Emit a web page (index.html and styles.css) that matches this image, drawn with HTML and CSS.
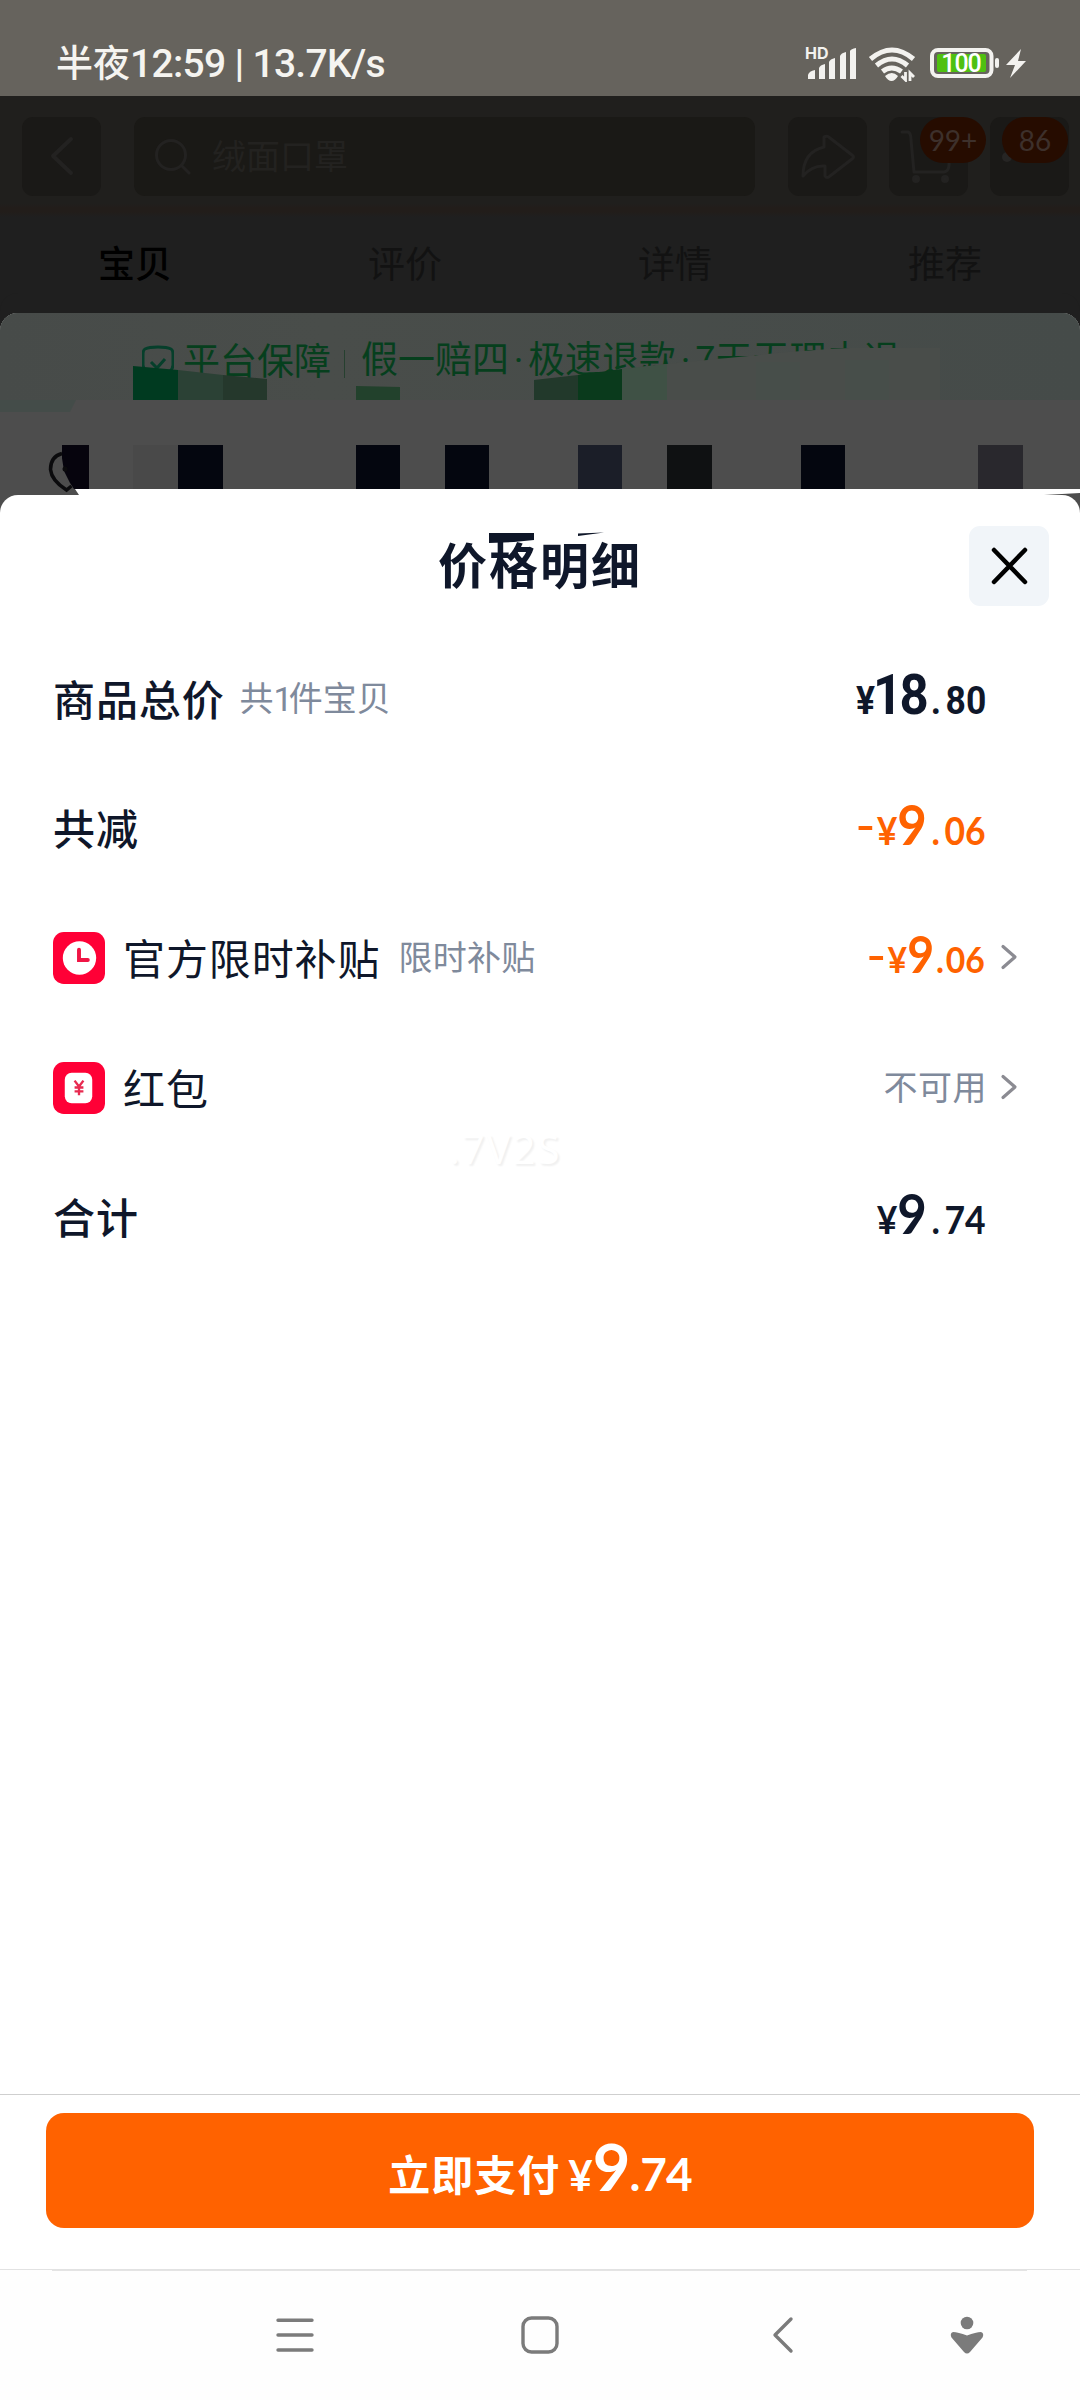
FILE: index.html
```html
<!DOCTYPE html>
<html lang="zh-CN">
<head>
<meta charset="utf-8">
<title>价格明细</title>
<link rel="stylesheet" href="styles.css">
</head>
<body>
<div class="phone">
  <header class="status">
    <span class="status-text">半夜<span class="latin">12:59 | 13.7K/s</span></span>
    <svg class="status-icons" width="224" height="40" viewBox="804 42 224 40">
      <text x="805" y="59" class="hd">HD</text>
      <g fill="#f3f2ef">
        <path d="M808 79v-4q1-4 7-5v9zM819 79v-11q1-3 6-4v15zM829 79v-17q1-3 6-4v21zM840 79v-23q1-3 6-4v27zM850 79v-28q1-2 6-3v31z"/>
        <path d="M885 76q7-6 13 0-3 5-6.500 5t-6.500-5z"/>
      </g>
      <g fill="none" stroke="#f3f2ef" stroke-width="5">
        <path d="M870.500 59q21.500-18 43 0"/>
        <path d="M876.500 65.500q15.500-13 31 0"/>
        <path d="M882.500 71.500q9-7 19 0"/>
      </g>
      <path d="M905 72v9l-5-5M910 82v-9l5 5" fill="none" stroke="#66635d" stroke-width="6"/>
      <path d="M905.500 72v8l-4-4M910 81v-8l4 4" fill="none" stroke="#f3f2ef" stroke-width="2.800"/>
      <rect x="932" y="50" width="59.500" height="26" rx="6" fill="none" stroke="#f3f2ef" stroke-width="4"/>
      <rect x="937" y="54" width="49" height="18" rx="2" fill="#4fc010"/>
      <rect x="995" y="58" width="4" height="10" rx="2" fill="#f3f2ef"/>
      <text x="961" y="72" class="battery-level" text-anchor="middle">100</text>
      <path d="M1021 49l-15 16h9l-5 13 16-17h-8z" fill="#f3f2ef"/>
    </svg>
  </header>

  <nav class="topbar">
    <div class="tile">
      <svg width="79" height="79" viewBox="0 0 79 79" class="line"><path d="M49 22L31 39l18 17"/></svg>
    </div>
    <div class="search">
      <svg width="36" height="36" viewBox="0 0 36 36" class="line thin"><circle cx="16" cy="16" r="14.500"/><path d="M27 27l7 7"/></svg>
      <span>绒面口罩</span>
    </div>
    <div class="tile">
      <svg width="79" height="79" viewBox="0 0 79 79" class="line thin"><path d="M36 30V20q3-2 6 1l22 17q3 2 0 4L42 59q-3 3-5 0V49q-13-1-22 10 0-24 21-29z"/></svg>
    </div>
    <div class="tile cart">
      <svg width="79" height="79" viewBox="0 0 79 79" class="line thin"><path d="M13 15h6q3 1 3 8l3 32h30q5-1 5-7l1-22"/><circle cx="27" cy="62" r="2.500" fill="#252423"/><circle cx="56" cy="62" r="2.500" fill="#252423"/></svg>
      <b class="badge badge-cart">99+</b>
    </div>
    <div class="tile">
      <svg width="79" height="79" viewBox="0 0 79 79"><circle cx="17" cy="40" r="5" fill="#262524"/></svg>
      <b class="badge badge-more">86</b>
    </div>
  </nav>

  <div class="tabs"><span class="active">宝贝</span><span>评价</span><span>详情</span><span>推荐</span></div>

  <section class="promo">
    <div class="guarantee">
      <svg width="32" height="36" viewBox="0 0 32 36" class="shield"><path d="M16 2q9 0 13 2 2 1 2 6v10q0 8-15 14Q1 28 1 20V10q0-5 2-6 4-2 13-2zM9 17l6 6 8-9"/></svg>
      <span class="guarantee-title">平台保障</span>
      <i class="divider"></i>
      <span>假一赔四<span class="sep">·</span>极速退款<span class="sep">·</span>7天无理由退</span>
    </div>
    <svg class="mosaic" width="1080" height="189" viewBox="0 313 1080 189">
      <path d="M0 400h76l-6 12H0z" fill="#444c49"/>
      <path d="M622 369l44-5 62-6 60-6 42-3 20-1h90v52H622z" fill="#494d4a"/>
      <path d="M133 366l45 4v30h-45z" fill="#003a20"/>
      <path d="M178 370l45 5v25h-45z" fill="#2b4135"/>
      <path d="M223 375l44 4v21h-44z" fill="#25382c"/>
      <path d="M356 386l44 1v13h-44z" fill="#22412c"/>
      <path d="M534 380l44-5v25h-44z" fill="#22392b"/>
      <path d="M578 375l44-6v31h-44z" fill="#0a3a1c"/>
      <path d="M622 369l45-5v36h-45z" fill="#3f5145"/>
      <path d="M756 362h44v38h-44zM845 360h44v40h-44z" fill="#474e4a"/>
      <path d="M62 445h27v44H74l-4-6-6-12-2-13z" fill="#06040d"/>
      <path d="M62 453.500q-11.500 3-11.500 16 1 11 16 20.500l5-4" fill="none" stroke="#0b0b0d" stroke-width="3.500"/>
      <circle cx="65" cy="469" r="2.500" fill="#0b0b0d"/>
      <path d="M133 445h45v44h-45z" fill="#494949"/>
      <path d="M178 445h45v44h-45zM356 445h44v44h-44zM445 445h44v44h-44zM801 445h44v44h-44z" fill="#04060f"/>
      <path d="M578 445h44v44h-44z" fill="#1b1e28"/>
      <path d="M667 445h45v44h-45z" fill="#0f1112"/>
      <path d="M978 445h45v44h-45z" fill="#29282d"/>
      <path d="M75 489h1005v4l-36 2H79z" fill="#fff"/>
    </svg>
  </section>

  <main class="sheet">
    <div class="sheet-head">
      <h1>价格明细</h1>
      <svg class="title-marks" width="120" height="16" viewBox="485 531 120 16"><path d="M489 533h45v7l-20 2-25 1z" fill="#0e1628"/><path d="M578 533.500l26-1-26 3.500z" fill="#0e1628"/></svg>
      <div class="close"><svg width="38" height="38" viewBox="0 0 38 38"><path d="M4 3L35 35M35 3L4 35"/></svg></div>
    </div>

    <div class="row strong">
      <span class="label">商品总价</span><span class="note count">共<span class="one">1</span>件宝贝</span>
      <div class="price plain-one"><span class="yen">¥</span><span class="int">18</span><span class="dot">.</span><span class="dec">80</span></div>
    </div>
    <div class="row strong">
      <span class="label">共减</span>
      <div class="price orange"><span class="minus"></span><span class="yen">¥</span><span class="int">9</span><span class="dot">.</span><span class="dec">06</span></div>
    </div>
    <div class="row">
      <svg class="icon" width="52" height="52" viewBox="0 0 53 53"><rect width="53" height="53" rx="11" fill="#ff0036"/><circle cx="27" cy="26.500" r="17" fill="#fff"/><path d="M26.500 18v10.500h9" fill="none" stroke="#f01545" stroke-width="4" stroke-linecap="round"/></svg>
      <span class="label">官方限时补贴</span><span class="note">限时补贴</span>
      <div class="price orange compact"><span class="minus"></span><span class="yen">¥</span><span class="int">9</span><span class="dot">.</span><span class="dec">06</span></div>
      <svg class="chevron" width="18" height="28" viewBox="0 0 18 28"><path d="M3 3.500l12 10.500L3 24.500"/></svg>
    </div>
    <div class="row">
      <svg class="icon" width="52" height="52" viewBox="0 0 53 53"><rect width="53" height="53" rx="11" fill="#ff0036"/><rect x="12" y="11" width="28" height="31" rx="7" fill="#fff"/><path d="M22 19l4.500 6 4.500-6M26.500 25v9M22 26h9M22 30h9" fill="none" stroke="#e82a50" stroke-width="2.400"/></svg>
      <span class="label">红包</span>
      <span class="unavailable">不可用</span>
      <svg class="chevron" width="18" height="28" viewBox="0 0 18 28"><path d="M3 3.500l12 10.500L3 24.500"/></svg>
      <span class="watermark">.7V2S</span>
    </div>
    <div class="row strong">
      <span class="label">合计</span>
      <div class="price"><span class="yen">¥</span><span class="int">9</span><span class="dot">.</span><span class="dec">74</span></div>
    </div>
  </main>

  <footer class="pay">
    <div class="pay-button">
      <span class="pay-label">立即支付</span><span class="pay-yen">¥</span><span class="pay-int">9</span><span class="pay-dot">.</span><span class="pay-dec">74</span>
    </div>
  </footer>

  <nav class="system">
    <i class="system-line"></i>
    <svg class="menu" width="38" height="38" viewBox="0 0 38 38"><path d="M2 4.200h34M2 19h34M2 34h34"/></svg>
    <svg class="home" width="38" height="38" viewBox="0 0 38 38"><rect x="2" y="2" width="34" height="34" rx="8.500"/></svg>
    <svg class="back" width="22" height="38" viewBox="0 0 22 38"><path d="M19 3L3 19l16 16"/></svg>
    <svg class="person" width="34" height="38" viewBox="0 0 34 38"><circle cx="17" cy="7" r="6.300"/><path d="M3 16q5 0 14 3.500 9-3.500 14-3.500 3.500 1 1.500 5.500L20 36q-3 3-6 0L1.500 21.500q-2-4.500 1.500-5.500z"/></svg>
  </nav>
</div>
</body>
</html>
```
FILE: styles.css
```css
* { box-sizing: border-box; }
body {
  margin: 0;
  background: #fff;
  font-family: "Noto Sans CJK SC", sans-serif;
  text-autospace: no-autospace;
}
svg { display: block; flex: none; }
.phone {
  width: 1080px;
  height: 2400px;
  display: flex;
  flex-direction: column;
  overflow: hidden;
}

/* Status bar */
.status {
  height: 96px;
  padding: 26px 52px 0 56px;
  display: flex;
  justify-content: space-between;
  background: #66635d;
}
.status-text {
  font-size: 37px;
  font-weight: 500;
  line-height: 70px;
  color: #f5f4f0;
  white-space: pre;
}
.latin { font-family: "Roboto", sans-serif; font-size: 39px; letter-spacing: -0.700px; }
.status-icons { margin-top: 16px; }
.hd { font: 700 16px "Inter", sans-serif; fill: #f3f2ef; }
.battery-level { font: 500 25px "Roboto", sans-serif; letter-spacing: -1px; fill: #fff; }

/* Dimmed page header */
.topbar {
  height: 121px;
  padding: 21px 11px 0 22px;
  display: flex;
  background: linear-gradient(#201f1d 0 108px, #221d1a 112px 116px, #1f1f1f 121px);
}
.tile {
  position: relative;
  width: 79px;
  height: 79px;
  margin-right: 22px;
  border-radius: 11px;
  background: #1a1917;
}
.tile:last-child { margin-right: 0; }
.search {
  width: 621px;
  height: 79px;
  margin: 0 33px 0 11px;
  padding-left: 21px;
  display: flex;
  align-items: center;
  gap: 21px;
  border-radius: 11px;
  background: #1a1916;
  color: #232220;
  font-size: 34px;
}
.search span { padding-bottom: 5px; }
.line {
  fill: none;
  stroke: #232221;
  stroke-width: 4;
  stroke-linecap: round;
  stroke-linejoin: round;
}
.thin { stroke-width: 3; }
.badge {
  position: absolute;
  top: 0;
  width: 66px;
  height: 46px;
  border-radius: 23px;
  background: #260c00;
  color: #3d302b;
  font: 400 28px/46px "Lato", sans-serif;
  text-align: center;
}
.badge-cart { left: 31px; z-index: 1; }
.badge-more { left: 12px; }

.tabs {
  height: 96px;
  display: grid;
  grid-template-columns: repeat(4, 1fr);
  background: #1f1f1f;
  color: #121212;
  font-size: 37px;
  line-height: 90px;
  text-align: center;
}
.tabs .active { color: #000; font-weight: 500; }

.promo {
  position: relative;
  z-index: 0;
  height: 182px;
  background: linear-gradient(#494d4a 0 87px, #4d4d4d 87px);
  border-radius: 18px 18px 0 0;
  box-shadow: 0 -20px 0 0 #1f1f1f;
}
.guarantee {
  height: 87px;
  padding: 5px 0 0 142px;
  display: flex;
  align-items: center;
  color: #063f1d;
  font-size: 37px;
  line-height: 50px;
  white-space: nowrap;
  border-radius: 18px 18px 0 0;
  background: linear-gradient(90deg, #474b49, #494d4a 30%, #454b49);
}
.sep {
  display: inline-block;
  width: 19px;
  font-family: "Roboto", sans-serif;
  text-align: center;
}
.shield { fill: none; stroke: #063f2b; stroke-width: 3; margin-top: 8px; }
.guarantee-title { margin-left: 9px; }
.divider { width: 1px; height: 28px; margin: 9px 16px 0 13px; background: #26402f; }
.mosaic { position: absolute; left: 0; top: 0; }

/* Price sheet */
.sheet {
  height: 1599px;
  border-radius: 18px 18px 0 0;
  background: #fff;
  box-shadow: 0 -18px 0 0 #4d4d4d;
  color: #0f172a;
}
.sheet-head {
  position: relative;
  height: 138px;
  display: grid;
  grid-template-columns: 1fr auto;
}
.sheet-head h1 {
  grid-area: 1 / 1 / 2 / 3;
  margin: 30px 0 0;
  font-size: 49px;
  font-weight: 700;
  letter-spacing: 2px;
  line-height: 76px;
  text-align: center;
}
.title-marks { position: absolute; left: 485px; top: 36px; }
.close {
  grid-area: 1 / 2;
  width: 80px;
  height: 80px;
  margin: 31px 31px 0 0;
  display: grid;
  place-items: center;
  border-radius: 11px;
  background: #f1f5f9;
}
.close path { stroke: #000; stroke-width: 4.500; stroke-linecap: round; }

.row {
  position: relative;
  height: 129.600px;
  padding: 0 62px 0 53px;
  display: flex;
  align-items: center;
}
.label { font-size: 42px; letter-spacing: 0.900px; line-height: 60px; }
.strong .label { font-weight: 500; }
.icon { margin: 2px 18px 0 0; }
.note {
  margin: -3px 0 0 18px;
  font-size: 34px;
  letter-spacing: 0.300px;
  color: #7f8a9c;
}
.count { margin-left: 15px; letter-spacing: 0; }
.one { font-family: "Roboto", sans-serif; letter-spacing: -4px; }
.price {
  margin-left: auto;
  display: flex;
  align-items: baseline;
  font: 700 39px/60px "Lato", sans-serif;
  transform: scaleX(0.91);
  transform-origin: right;
}
.plain-one { font-family: "Roboto", sans-serif; }
.plain-one .int { letter-spacing: -3px; }
.plain-one .yen { margin-right: -2px; }
.strong .price { margin-right: 32px; }
.orange { color: #ff6200; }
.minus { width: 15px; height: 4px; margin: 2px 5px 0 0; background: currentColor; align-self: center; }
.int { font-size: 56px; }
.dot { margin: 0 5px 0 5px; }
.compact { font-size: 37px; margin-right: 2px; }
.compact .int { font-size: 51px; }
.compact .dot { margin: 0 2px; }
.unavailable { margin: -3px 0 0 auto; font-size: 34px; letter-spacing: 0.500px; color: #7f8a9c; }
.chevron { margin-left: 13px; }
.chevron path { fill: none; stroke: #8b8b92; stroke-width: 3.200; stroke-linecap: round; stroke-linejoin: round; }
.watermark {
  position: absolute;
  left: 449px;
  top: 97px;
  font: 400 40px/60px "Noto Sans", sans-serif;
  letter-spacing: 2px;
  color: #fff;
  text-shadow: 2px 2px 2px #f0f0f0;
}

/* Payment */
.pay {
  height: 175px;
  padding: 18px 46px 0;
  border-top: 1px solid #cfcfcf;
  background: #fff;
}
.pay-button {
  height: 115px;
  display: flex;
  justify-content: center;
  align-items: baseline;
  border-radius: 18px;
  background: #ff6200;
  color: #fff;
  font: 700 46px/107px "Lato", sans-serif;
}
.pay-label {
  font: 700 42px/107px "Noto Sans CJK SC", sans-serif;
  letter-spacing: 1px;
  margin-right: 8px;
}
.pay-yen { font-size: 42px; }
.pay-int { font-size: 65px; letter-spacing: -1px; }
.pay-dec { letter-spacing: -1px; }

/* System navigation */
.system {
  position: relative;
  height: 131px;
  padding: 46px 97px 0 276px;
  display: flex;
  border-top: 1px solid #e2e2e2;
  background: #fefefe;
}
.system-line { position: absolute; left: 52px; top: 0; width: 975px; height: 1px; background: #e4e4e4; }
.system path, .system rect { fill: none; stroke: #7b7b7b; stroke-width: 3.400; stroke-linecap: round; stroke-linejoin: round; }
.home { margin-left: 207px; }
.back { margin-left: 213px; }
.person { margin-left: 156px; }
.system .person path, .person circle { fill: #7b7b7b; stroke: none; }
```
